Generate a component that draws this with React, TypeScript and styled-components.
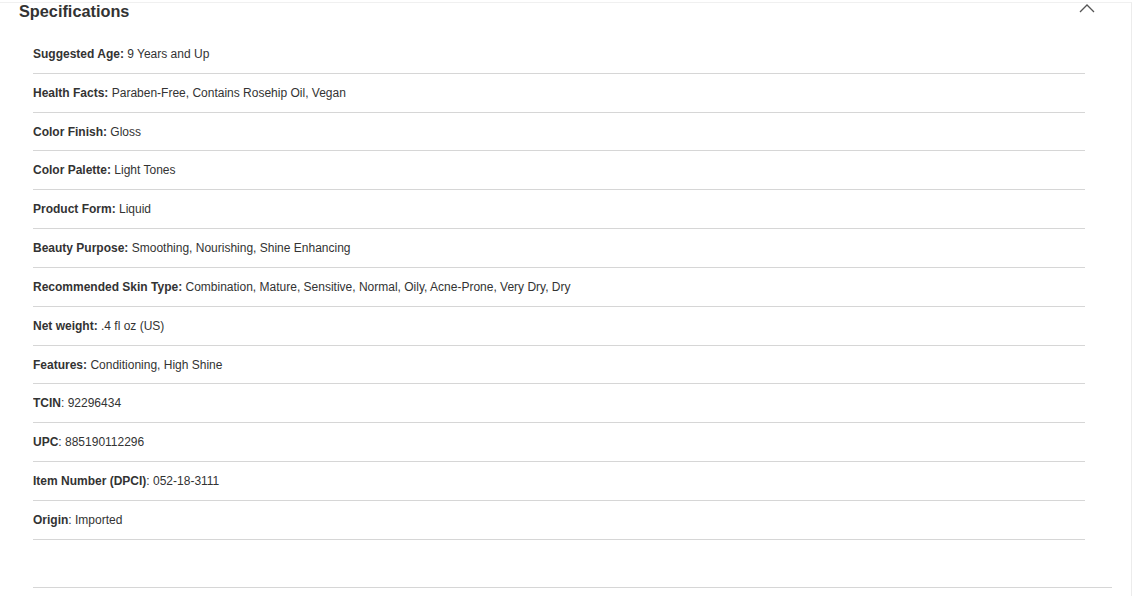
import styled, { createGlobalStyle } from 'styled-components';

const GlobalStyle = createGlobalStyle`
  html, body {
    margin: 0;
    padding: 0;
    background: #fff;
  }
  body {
    font-family: 'Liberation Sans', Arial, sans-serif;
    color: #333;
  }
`;

const specs: { label: string; value: string; colon?: 'in' | 'out' }[] = [
  { label: 'Suggested Age:', value: '9 Years and Up' },
  { label: 'Health Facts:', value: 'Paraben-Free, Contains Rosehip Oil, Vegan' },
  { label: 'Color Finish:', value: 'Gloss' },
  { label: 'Color Palette:', value: 'Light Tones' },
  { label: 'Product Form:', value: 'Liquid' },
  { label: 'Beauty Purpose:', value: 'Smoothing, Nourishing, Shine Enhancing' },
  {
    label: 'Recommended Skin Type:',
    value: 'Combination, Mature, Sensitive, Normal, Oily, Acne-Prone, Very Dry, Dry',
  },
  { label: 'Net weight:', value: '.4 fl oz (US)' },
  { label: 'Features:', value: 'Conditioning, High Shine' },
  { label: 'TCIN', value: '92296434', colon: 'out' },
  { label: 'UPC', value: '885190112296', colon: 'out' },
  { label: 'Item Number (DPCI)', value: '052-18-3111', colon: 'out' },
  { label: 'Origin', value: 'Imported', colon: 'out' },
];

export default function App() {
  return (
    <>
      <GlobalStyle />
      <Panel>
        <Header>
          <Title>Specifications</Title>
          <Chevron width="16" height="10" viewBox="0 0 16 10" aria-hidden>
            <path d="M1 9 L8 2 L15 9" fill="none" stroke="#555" strokeWidth="1.3" />
          </Chevron>
        </Header>
        <List>
          {specs.map((s) => (
            <Row key={s.label}>
              <Label>{s.label}</Label>
              {s.colon === 'out' ? ': ' : ' '}
              {s.value}
            </Row>
          ))}
        </List>
        <Footer />
      </Panel>
    </>
  );
}

const Panel = styled.div`
  margin-top: 2px;
  width: 1132px;
  height: 594px;
  box-sizing: border-box;
  border-top: 1px solid #f0f0f0;
  border-right: 1px solid #ececec;
  display: flex;
  flex-direction: column;
`;

const Header = styled.div`
  display: flex;
  align-items: center;
  justify-content: space-between;
  height: 17px;
  padding: 0 36px 0 19px;
`;

const Title = styled.h2`
  margin: 0;
  font-size: 16.3px;
  font-weight: 700;
  color: #333;
`;

const Chevron = styled.svg`
  display: block;
  margin-top: -8px;
`;

const List = styled.div`
  margin: 15px 0 0 33px;
  width: 1052px;
`;

const Row = styled.div`
  height: 38.83px;
  box-sizing: border-box;
  line-height: 38px;
  white-space: pre;
  font-size: 12px;
  color: #333;
  border-bottom: 1px solid #d6d6d6;
  overflow: hidden;
`;

const Label = styled.span`
  font-weight: 700;
  color: #333;
`;

const Footer = styled.div`
  margin: 47px 0 0 33px;
  width: 1079px;
  border-bottom: 1px solid #d6d6d6;
`;
